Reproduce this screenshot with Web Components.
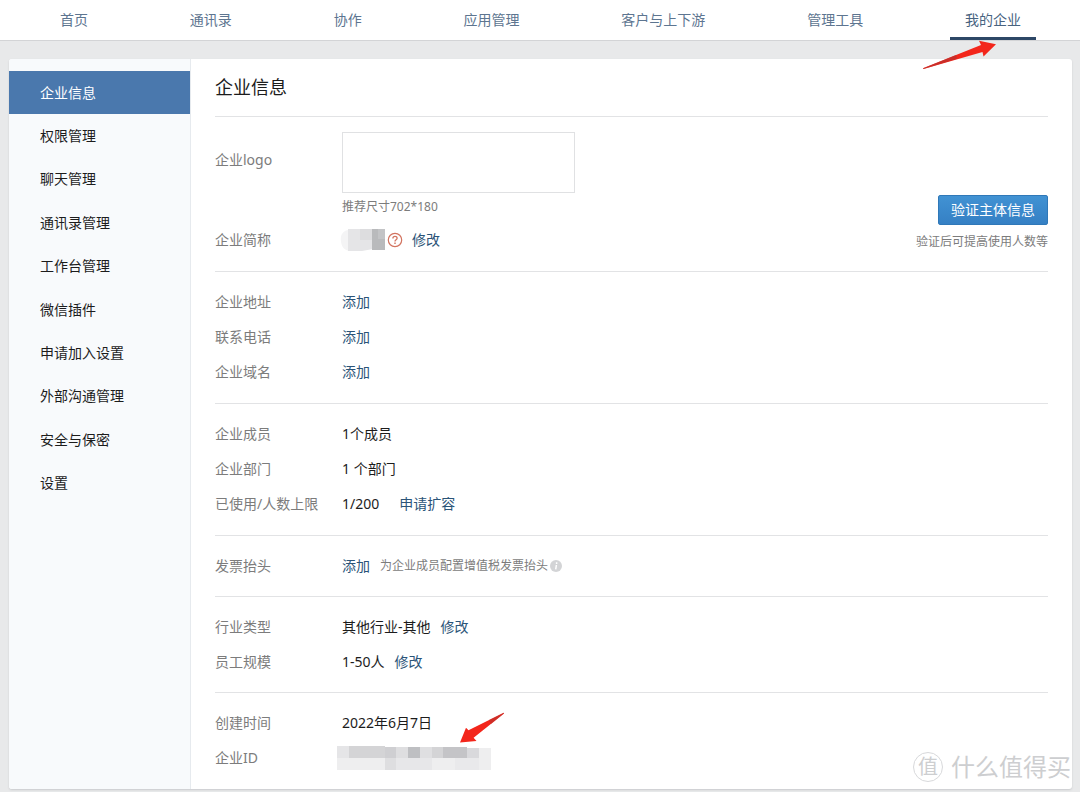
<!DOCTYPE html>
<html lang="zh-CN">
<head>
<meta charset="utf-8">
<meta name="viewport" content="width=device-width, initial-scale=1">
<title>企业信息</title>
<style>
  body {
    margin: 0;
    background: #e8e9ea;
    color: #1c1c1c;
    font: 14px/20px "Noto Sans", "Noto Sans CJK SC", sans-serif;
    --link: #2b5478;
    --muted: #7c7c7c;
    --line: #e2e3e5;
  }
</style>
</head>
<body>
<corp-app></corp-app>

<script>
const define = (name, html, setup) => {
  const template = document.createElement('template');
  template.innerHTML = html;
  customElements.define(name, class extends HTMLElement {
    constructor() {
      super();
      this.attachShadow({ mode: 'open' }).append(template.content.cloneNode(true));
    }
    connectedCallback() { if (setup) setup(this, this.shadowRoot); }
  });
};

define('red-arrow', `
  <style>
    :host { display: block; position: absolute; pointer-events: none; }
    svg { display: block; }
    svg[hidden] { display: none; }
  </style>
  <svg class="right" width="76" height="30" viewBox="0 0 76 30" aria-hidden="true">
    <path d="M1 28.2 L59 5 L57 .8 L74 4.2 L61.5 16.6 L60.5 12 L1.5 29 Z" fill="#f3261b"/>
    <path d="M1 28.2 L34 15 L35 18.8 L1.5 29 Z" fill="#b8322f" opacity=".7"/>
  </svg>
  <svg class="left" width="46" height="32" viewBox="0 0 46 32" aria-hidden="true">
    <path d="M44.7 .8 L9.5 18.3 L7 15.8 L1 30.6 L17.5 29 L14.6 25.8 L45 1.6 Z" fill="#f3261b"/>
    <path d="M44.7 .8 L30 8 L32 12 L45 1.6 Z" fill="#b8322f" opacity=".6"/>
  </svg>`, (host, root) => {
    root.querySelector('.left').toggleAttribute('hidden', host.getAttribute('to') !== 'left');
    root.querySelector('.right').toggleAttribute('hidden', host.getAttribute('to') === 'left');
  });

define('top-tab', `
  <style>
    :host { display: block; position: relative; }
    a { display: block; box-sizing: border-box; height: 40px; padding: 0 15px; line-height: 40px;
        color: #5d7590; text-decoration: none; white-space: nowrap; }
    :host([active]) a { color: #48637f; border-bottom: 3px solid #2d4766; }
  </style>
  <a href="#"><slot></slot></a><slot name="mark"></slot>`);

define('top-nav', `
  <style>
    :host { display: block; background: #fff; border-bottom: 1px solid #d3d4d6; }
    nav { display: flex; justify-content: space-between; padding: 0 44px 0 45px; }
    red-arrow { left: -28px; top: 40px; z-index: 2; }
  </style>
  <nav aria-label="主导航">
    <top-tab>首页</top-tab><top-tab>通讯录</top-tab><top-tab>协作</top-tab><top-tab>应用管理</top-tab>
    <top-tab>客户与上下游</top-tab><top-tab>管理工具</top-tab>
    <top-tab active>我的企业<red-arrow slot="mark" to="right"></red-arrow></top-tab>
  </nav>`);

define('side-item', `
  <style>
    :host { display: grid; }
    a { display: flex; align-items: center; padding: 0 31px; color: #1c1c1c; text-decoration: none; }
    :host([active]) a { background: #4a78ad; color: #fff; }
  </style>
  <a href="#"><slot></slot></a>`);

define('side-menu', `
  <style>
    :host { display: block; background: #f8fafc; border-right: 1px solid #e6eaee; padding-top: 12px; border-radius: 3px 0 0 3px; }
    nav { display: grid; grid-auto-rows: 1fr; min-height: 434px; }
  </style>
  <nav aria-label="我的企业">
    <side-item active>企业信息</side-item><side-item>权限管理</side-item><side-item>聊天管理</side-item>
    <side-item>通讯录管理</side-item><side-item>工作台管理</side-item><side-item>微信插件</side-item>
    <side-item>申请加入设置</side-item><side-item>外部沟通管理</side-item><side-item>安全与保密</side-item>
    <side-item>设置</side-item>
  </nav>`);

define('text-link', `
  <style>
    :host { display: inline-block; }
    a { color: var(--link); text-decoration: none; }
  </style>
  <a href="#"><slot></slot></a>`);

define('info-section', `
  <style>
    :host { display: block; padding: 12px 0 14px; border-top: 1px solid var(--line); }
    :host([compact]) { padding-bottom: 13px; }
  </style>
  <slot></slot>`);

define('info-row', `
  <style>
    :host { display: flex; min-height: 35px; }
    .label { flex: none; width: 127px; line-height: 35px; color: var(--muted); }
    .value { display: flex; align-items: center; gap: 10px; position: relative; }
    :host([tall]) { padding: 3px 0 6px; }
    :host([tall]) .label { padding-top: 10px; }
    :host([wide]) .value { gap: 20px; }
  </style>
  <div class="label"><slot name="label"></slot></div>
  <div class="value"><slot></slot></div>`);

define('logo-box', `
  <style>
    :host { display: block; }
    .box { box-sizing: border-box; width: 233px; height: 61px; border: 1px solid #e0e1e3; background: #fff; }
    .tip { margin-top: 5px; font-size: 12px; line-height: 18px; color: var(--muted); }
  </style>
  <div class="box" role="img" aria-label="企业logo"></div>
  <div class="tip">推荐尺寸702*180</div>`);

define('masked-name', `
  <style>
    :host { display: flex; align-items: center; gap: 2px; margin-left: -2px; margin-right: -1px; }
    svg { display: block; }
  </style>
  <svg width="45" height="22" viewBox="0 0 45 22" aria-hidden="true">
    <path d="M8 1 C2 2 0 7 1 13 C2 19 5 21 9 22 Z" fill="#f4f4f5"/>
    <path d="M8 0 H33 V20 L22 22 H8 Z" fill="#e5e5e7"/>
    <path d="M20 0 H33 V11 H20 Z" fill="#dddddf"/>
    <path d="M32 0 H45 V21 H32 Z" fill="#b9babc"/>
    <path d="M38 0 H45 V10 H38 Z" fill="#c3c4c6"/>
  </svg>
  <svg width="16" height="16" viewBox="0 0 16 16" fill="none" stroke="#d2735f" aria-hidden="true">
    <circle cx="8" cy="8" r="6.7" stroke-width="1.2"/>
    <path d="M5.9 6.4 C5.9 3.7 10.1 3.7 10.1 6.3 C10.1 7.8 8 7.8 8 9.5" stroke-width="1.3"/>
    <path d="M8 10.6 V12" stroke-width="1.4"/>
  </svg>`);

define('masked-id', `
  <style>
    :host { display: block; margin-left: -5px; }
    svg { display: block; }
    red-arrow { left: 117px; top: -28px; }
  </style>
  <svg width="154" height="24" viewBox="0 0 154 24" aria-hidden="true">
    <path d="M0 2 H154 V24 H0 Z" fill="#eeeeef"/>
    <path d="M0 0 H12 V12 H0 Z" fill="#e5e5e7"/>
    <path d="M12 0 H48 V12 H12 Z" fill="#d4d4d6"/>
    <path d="M48 1 H59 V12 H48 Z" fill="#cfcfd2"/>
    <path d="M59 1 H71 V12 H59 Z" fill="#dedee0"/>
    <path d="M71 1 H83 V12 H71 Z" fill="#bebfc2"/>
    <path d="M83 1 H95 V12 H83 Z" fill="#dfdfe1"/>
    <path d="M95 1 H106 V12 H95 Z" fill="#d4d4d6"/>
    <path d="M106 1 H130 V12 H106 Z" fill="#c4c4c7"/>
    <path d="M130 2 H142 V12 H130 Z" fill="#d9d9dc"/>
    <path d="M48 12 H59 V24 H48 Z" fill="#dedee0"/>
    <path d="M59 12 H95 V24 H59 Z" fill="#e7e7e9"/>
    <path d="M118 12 H142 V24 H118 Z" fill="#e9e9eb"/>
  </svg>
  <red-arrow to="left"></red-arrow>`);

define('invoice-tip', `
  <style>
    :host { display: flex; align-items: center; gap: 2px; font-size: 12px; color: var(--muted); }
    svg { display: block; }
  </style>
  <slot></slot>
  <svg width="12" height="12" viewBox="0 0 12 12" aria-hidden="true">
    <circle cx="6" cy="6" r="6" fill="#d3d4d6"/>
    <path d="M6.6 2.3 V4 M6.4 5 L5.7 9.3" stroke="#fff" stroke-width="1.5"/>
  </svg>`);

define('verify-box', `
  <style>
    :host { display: flex; flex-direction: column; align-items: flex-end; align-self: flex-end; gap: 8px; margin-bottom: 6px; }
    button { height: 30px; padding: 0 12px; border: 1px solid #2f78b8; border-radius: 2px; color: #fff;
             font: inherit; line-height: 28px; background: linear-gradient(#4192d3, #3580c4); }
    div { font-size: 12px; line-height: 18px; color: var(--muted); }
  </style>
  <button type="button">验证主体信息</button>
  <div>验证后可提高使用人数等</div>`);

define('corp-info', `
  <style>
    :host { display: block; padding: 0 24px; }
    h1 { margin: 0; font-size: 18px; line-height: 57px; font-weight: 400; }
    .split { display: flex; justify-content: space-between; }
  </style>
  <h1>企业信息</h1>
  <info-section>
    <div class="split">
      <div>
        <info-row tall><span slot="label">企业logo</span><logo-box></logo-box></info-row>
        <info-row><span slot="label">企业简称</span><masked-name></masked-name><text-link>修改</text-link></info-row>
      </div>
      <verify-box></verify-box>
    </div>
  </info-section>
  <info-section>
    <info-row><span slot="label">企业地址</span><text-link>添加</text-link></info-row>
    <info-row><span slot="label">联系电话</span><text-link>添加</text-link></info-row>
    <info-row><span slot="label">企业域名</span><text-link>添加</text-link></info-row>
  </info-section>
  <info-section>
    <info-row><span slot="label">企业成员</span><span>1个成员</span></info-row>
    <info-row><span slot="label">企业部门</span><span>1 个部门</span></info-row>
    <info-row wide><span slot="label">已使用/人数上限</span><span>1/200</span><text-link>申请扩容</text-link></info-row>
  </info-section>
  <info-section compact>
    <info-row><span slot="label">发票抬头</span><text-link>添加</text-link><invoice-tip>为企业成员配置增值税发票抬头</invoice-tip></info-row>
  </info-section>
  <info-section compact>
    <info-row><span slot="label">行业类型</span><span>其他行业-其他</span><text-link>修改</text-link></info-row>
    <info-row><span slot="label">员工规模</span><span>1-50人</span><text-link>修改</text-link></info-row>
  </info-section>
  <info-section>
    <info-row><span slot="label">创建时间</span><span>2022年6月7日</span></info-row>
    <info-row><span slot="label">企业ID</span><masked-id></masked-id></info-row>
  </info-section>`);

define('site-watermark', `
  <style>
    :host { display: flex; align-items: center; gap: 8px; position: absolute; right: 1px; bottom: 4px;
            color: #cdced0; font-size: 24px; line-height: 36px; pointer-events: none; }
    .seal { box-sizing: border-box; width: 30px; height: 30px; border: 1px solid #d8d9db; border-radius: 50%;
            font-size: 20px; line-height: 28px; text-align: center; }
  </style>
  <span class="seal">值</span><span>什么值得买</span>`);

define('corp-app', `
  <style>
    :host { display: block; }
    main { display: grid; grid-template-columns: 182px 1fr; position: relative; margin: 18px 8px 3px 9px;
           background: #fff; border-radius: 3px; box-shadow: 0 1px 2px #c9cbcd; }
  </style>
  <top-nav></top-nav>
  <main>
    <side-menu></side-menu>
    <corp-info></corp-info>
    <site-watermark></site-watermark>
  </main>`);
</script>
</body>
</html>
